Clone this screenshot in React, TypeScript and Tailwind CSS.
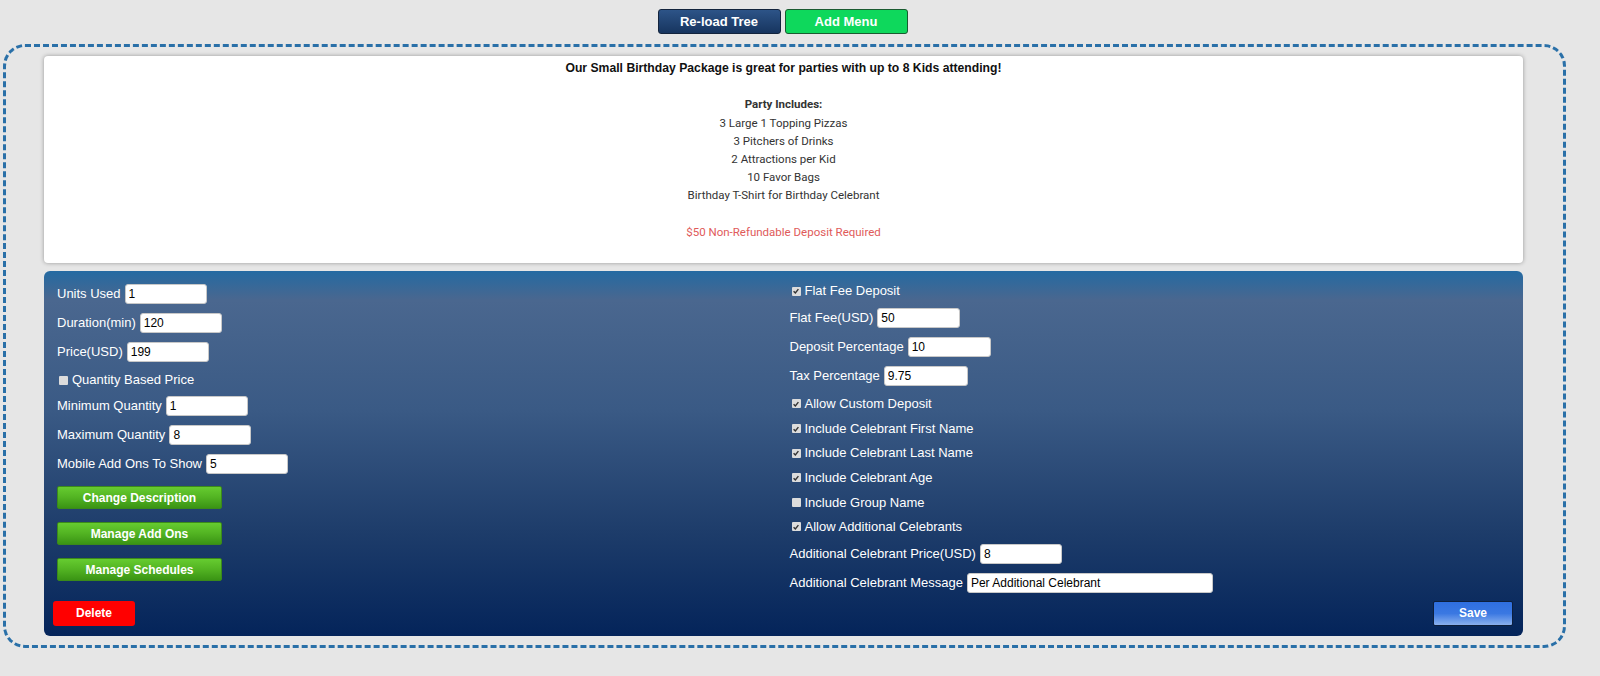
import React from 'react';

const arial = "font-['Liberation_Sans',Arial,sans-serif]";

function Check({ checked }: { checked?: boolean }) {
  return (
    <span className="mr-[4px] ml-[2px] inline-flex h-[9px] w-[9px] items-center justify-center rounded-[1px] bg-[#dcdcdc]">
      {checked && (
        <svg viewBox="0 0 10 10" className="h-[8px] w-[8px]">
          <path d="M2 5.2 L4.2 7.4 L8 2.6" fill="none" stroke="#333" strokeWidth="1.8" />
        </svg>
      )}
    </span>
  );
}

function Field({ label, value, w = 'w-[82px]', className = '' }: { label: string; value: string; w?: string; className?: string }) {
  return (
    <div className={`flex h-[20px] items-center ${className}`}>
      <span className="text-[13px] text-white">{label}</span>
      <input
        readOnly
        value={value}
        className={`ml-[4px] h-[20px] ${w} rounded-[3px] border border-[#c8c8c8] bg-white px-[3px] text-[12px] text-black outline-none`}
      />
    </div>
  );
}

function CheckRow({ label, checked, className = '' }: { label: string; checked?: boolean; className?: string }) {
  return (
    <div className={`flex items-center ${className}`}>
      <Check checked={checked} />
      <span className="text-[13px] text-white">{label}</span>
    </div>
  );
}

function GreenButton({ children, className = '' }: { children: React.ReactNode; className?: string }) {
  return (
    <button className={`h-[23px] w-[165px] rounded-[2px] border border-[#3b8a1a] bg-gradient-to-b from-[#66cc30] via-[#52b322] to-[#3a9414] text-[12px] font-bold text-white ${className}`}>
      {children}
    </button>
  );
}

export default function App() {
  return (
    <div className={`min-h-screen w-full bg-[#e6e6e6] ${arial}`}>
      <div className="w-[1569px] px-[3px]">
        <div className="flex justify-center gap-[4px] pt-[9px] pr-[4px]">
          <button className="h-[25px] w-[123px] rounded-[3px] border border-[#13243d] bg-gradient-to-b from-[#2d5488] to-[#17355f] text-[13px] font-bold text-white">
            Re-load Tree
          </button>
          <button className="h-[25px] w-[123px] rounded-[3px] border border-[#1a5a30] bg-[#0ed85c] text-[13px] font-bold text-white">
            Add Menu
          </button>
        </div>

        <div className="mt-[10px] rounded-[22px] border-[3px] border-dashed border-[#2a70a8] px-[38px] pt-[9px] pb-[9px] pr-[40px]">
          <div className="h-[207px] rounded-[4px] bg-white pt-[3px] text-center shadow-[0_0_4px_rgba(0,0,0,0.35)]">
            <p className="text-[12.2px] font-bold leading-[18.2px] text-[#111]">
              Our Small Birthday Package is great for parties with up to 8 Kids attending!
            </p>
            <div className="font-['Roboto',sans-serif] text-[11.5px] leading-[18.2px] text-[#333]">
              <p>&nbsp;</p>
              <p className="font-bold">Party Includes:</p>
              <p>3 Large 1 Topping Pizzas</p>
              <p>3 Pitchers of Drinks</p>
              <p>2 Attractions per Kid</p>
              <p>10 Favor Bags</p>
              <p>Birthday T-Shirt for Birthday Celebrant</p>
              <p>&nbsp;</p>
              <p className="text-[#e05a5a]">$50 Non-Refundable Deposit Required</p>
            </div>
          </div>

          <div className="mt-[8px] h-[365px] rounded-[6px] bg-[linear-gradient(to_bottom,#246aa2_0%,#4a678f_8%,#3a5a85_38%,#1d3c6a_72%,#04245a_100%)] px-[9px] pt-[12px]">
            <div className="grid grid-cols-2">
              <div className="flex flex-col items-start pl-[4px] pt-[1px]">
                <Field label="Units Used" value="1" />
                <Field label="Duration(min)" value="120" className="mt-[9px]" />
                <Field label="Price(USD)" value="199" className="mt-[9px]" />
                <CheckRow label="Quantity Based Price" className="mt-[10px] h-[16px]" />
                <Field label="Minimum Quantity" value="1" className="mt-[8px]" />
                <Field label="Maximum Quantity" value="8" className="mt-[9px]" />
                <Field label="Mobile Add Ons To Show" value="5" className="mt-[9px]" />
                <GreenButton className="mt-[12px]">Change Description</GreenButton>
                <GreenButton className="mt-[13px]">Manage Add Ons</GreenButton>
                <GreenButton className="mt-[13px]">Manage Schedules</GreenButton>
              </div>
              <div className="flex flex-col items-start pl-[6px]">
                <CheckRow label="Flat Fee Deposit" checked className="h-[16px]" />
                <Field label="Flat Fee(USD)" value="50" w="w-[83px]" className="mt-[9px]" />
                <Field label="Deposit Percentage" value="10" w="w-[83px]" className="mt-[9px]" />
                <Field label="Tax Percentage" value="9.75" w="w-[84px]" className="mt-[9px]" />
                <div className="mt-[5.7px] flex flex-col">
                  <CheckRow label="Allow Custom Deposit" checked className="h-[24.6px]" />
                  <CheckRow label="Include Celebrant First Name" checked className="h-[24.6px]" />
                  <CheckRow label="Include Celebrant Last Name" checked className="h-[24.6px]" />
                  <CheckRow label="Include Celebrant Age" checked className="h-[24.6px]" />
                  <CheckRow label="Include Group Name" className="h-[24.6px]" />
                  <CheckRow label="Allow Additional Celebrants" checked className="h-[24.6px]" />
                </div>
                <Field label="Additional Celebrant Price(USD)" value="8" className="mt-[4.7px]" />
                <Field label="Additional Celebrant Message" value="Per Additional Celebrant" w="w-[246px]" className="mt-[9px]" />
              </div>
            </div>
            <div className="mt-[8px] flex justify-between pr-[1px]">
              <button className="h-[25px] w-[82px] rounded-[3px] bg-[#ff0000] text-[12px] font-bold text-white">Delete</button>
              <button className="h-[25px] w-[80px] rounded-[2px] border border-[#0d1f3d] bg-gradient-to-b from-[#2f6fe0] via-[#3a78e2] to-[#8ab0ee] text-[12px] font-bold text-white">
                Save
              </button>
            </div>
          </div>
        </div>
      </div>
    </div>
  );
}
